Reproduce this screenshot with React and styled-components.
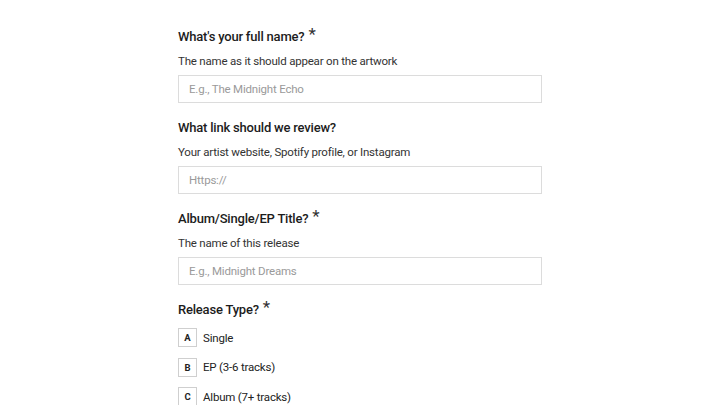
import React from "react";
import styled, { createGlobalStyle } from "styled-components";

const Global = createGlobalStyle`
  html, body { margin: 0; padding: 0; background: #ffffff; }
  body { font-family: Roboto, "Liberation Sans", Arial, sans-serif; color: #1c1c1c; }
  * { box-sizing: border-box; }
`;

const Page = styled.div`
  width: 364px;
  margin: 0 auto;
  padding-top: 27px;
  display: flex;
  flex-direction: column;
  gap: 15px;
`;

const Field = styled.div`
  display: flex;
  flex-direction: column;
`;

const Label = styled.div`
  font-size: 13px;
  font-weight: 500;
  line-height: 20px;
  letter-spacing: -0.2px;
  color: #1c1c1c;
  display: flex;
  align-items: flex-start;
`;

const Star = styled.span`
  font-size: 17px;
  font-weight: 400;
  line-height: 12px;
  margin-left: 4px;
  color: #333;
  position: relative;
  top: 1px;
`;

const Hint = styled.div`
  font-size: 11.5px;
  line-height: 18px;
  letter-spacing: -0.2px;
  color: #333;
  margin-top: 5px;
`;

const Input = styled.input`
  margin-top: 5px;
  width: 100%;
  height: 28px;
  border: 1.5px solid #dcdcdc;
  border-radius: 0;
  padding: 0 10px;
  font-family: inherit;
  font-size: 11.5px;
  letter-spacing: -0.2px;
  color: #333;
  outline: none;
  &::placeholder { color: #9a9a9a; }
`;

const Options = styled.div`
  display: flex;
  flex-direction: column;
  gap: 10.5px;
  margin-top: 8px;
`;

const Option = styled.div`
  display: flex;
  align-items: center;
  gap: 6px;
  font-size: 11.5px;
  letter-spacing: -0.2px;
  color: #222;
`;

const Key = styled.span`
  width: 19px;
  height: 19px;
  border: 1px solid #cfcfcf;
  display: inline-flex;
  align-items: center;
  justify-content: center;
  font-size: 9.5px;
  font-weight: 700;
  letter-spacing: 0;
  color: #222;
`;

const fields = [
  { label: "What's your full name?", req: true, hint: "The name as it should appear on the artwork", ph: "E.g., The Midnight Echo" },
  { label: "What link should we review?", req: false, hint: "Your artist website, Spotify profile, or Instagram", ph: "Https://" },
  { label: "Album/Single/EP Title?", req: true, hint: "The name of this release", ph: "E.g., Midnight Dreams" },
];

const options = [
  ["A", "Single"],
  ["B", "EP (3-6 tracks)"],
  ["C", "Album (7+ tracks)"],
];

export default function App() {
  return (
    <>
      <Global />
      <Page>
        {fields.map((f) => (
          <Field key={f.label}>
            <Label>
              {f.label}
              {f.req && <Star>*</Star>}
            </Label>
            <Hint>{f.hint}</Hint>
            <Input placeholder={f.ph} />
          </Field>
        ))}
        <Field>
          <Label>
            Release Type?<Star>*</Star>
          </Label>
          <Options>
            {options.map(([k, t]) => (
              <Option key={k}>
                <Key>{k}</Key>
                {t}
              </Option>
            ))}
          </Options>
        </Field>
      </Page>
    </>
  );
}
